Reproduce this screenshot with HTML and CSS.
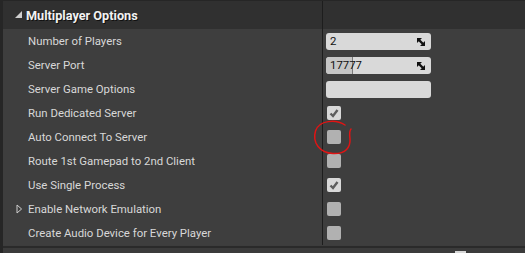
FILE: index.html
```html
<!DOCTYPE html>
<html lang="en">
<head>
  <meta charset="UTF-8" />
  <title>Multiplayer Options</title>
  <link rel="stylesheet" href="styles.css">
</head>
<body>
  <div class="panel">
    <div class="header">
      <div class="name">
        <svg class="caret" width="7" height="7" viewBox="0 0 7 7"><polygon points="0,7 7,7 7,0" fill="#cfcfcf"/></svg>
        Multiplayer Options
      </div>
      <div class="value"></div>
    </div>

    <div class="row">
      <div class="name">Number of Players</div>
      <div class="value">
        <div class="spin"><span>2</span>
          <svg class="arrows" width="8" height="8" viewBox="0 0 8 8"><polygon points="0,0 5,0 0,5" fill="#111"/><polygon points="8,8 8,3 3,8" fill="#111"/><line x1="1" y1="1" x2="7" y2="7" stroke="#111" stroke-width="2.4"/></svg>
        </div>
      </div>
    </div>
    <div class="row">
      <div class="name">Server Port</div>
      <div class="value">
        <div class="spin"><div class="fill"></div><span>17777</span>
          <svg class="arrows" width="8" height="8" viewBox="0 0 8 8"><polygon points="0,0 5,0 0,5" fill="#111"/><polygon points="8,8 8,3 3,8" fill="#111"/><line x1="1" y1="1" x2="7" y2="7" stroke="#111" stroke-width="2.4"/></svg>
        </div>
      </div>
    </div>
    <div class="row">
      <div class="name">Server Game Options</div>
      <div class="value"><div class="text-box"></div></div>
    </div>
    <div class="row">
      <div class="name">Run Dedicated Server</div>
      <div class="value"><div class="check on"><svg width="14" height="14" viewBox="0 0 14 14"><polyline points="3.5,7.5 6,10 10.5,4" fill="none" stroke="#5d5d5d" stroke-width="2.4"/></svg></div></div>
    </div>
    <div class="row">
      <div class="name">Auto Connect To Server</div>
      <div class="value"><div class="check"></div></div>
    </div>
    <div class="row">
      <div class="name">Route 1st Gamepad to 2nd Client</div>
      <div class="value"><div class="check"></div></div>
    </div>
    <div class="row">
      <div class="name">Use Single Process</div>
      <div class="value"><div class="check on"><svg width="14" height="14" viewBox="0 0 14 14"><polyline points="3.5,7.5 6,10 10.5,4" fill="none" stroke="#5d5d5d" stroke-width="2.4"/></svg></div></div>
    </div>
    <div class="row">
      <div class="name">
        <svg class="expand" width="7" height="10" viewBox="0 0 7 10"><polygon points="1,1 5.6,5 1,9" fill="none" stroke="#cfcfcf" stroke-width="1"/></svg>
        Enable Network Emulation
      </div>
      <div class="value"><div class="check"></div></div>
    </div>
    <div class="row">
      <div class="name">Create Audio Device for Every Player</div>
      <div class="value"><div class="check"></div></div>
    </div>

    <div class="footer"><span class="scroll"></span></div>

    <svg class="mark" width="525" height="253" viewBox="0 0 525 253">
      <path d="M345 125 C 336 119, 319 120, 315.5 131 C 312 143, 320 153, 333 153.5 C 346 154, 350.5 147, 350 139 C 349.5 134, 349 131, 351 129" fill="none" stroke="#e01414" stroke-width="1.5" stroke-linecap="round"/>
    </svg>
  </div>
</body>
</html>
```

FILE: styles.css
```css
body {
  margin: 0;
  background: #3d3d3d;
  font-family: Roboto, 'Liberation Sans', sans-serif;
  width: 525px;
  height: 253px;
  overflow: hidden;
}

.panel {
  position: relative;
  border-left: 3px solid #262626;
  height: 253px;
  box-sizing: border-box;
}

.header,
.row {
  display: grid;
  grid-template-columns: 319px 1fr;
}

.header {
  height: 28px;
  border-top: 1px solid #262626;
  background: #303030;
}

.header .name {
  display: flex;
  align-items: center;
  padding-left: 12px;
  gap: 4px;
  font-size: 12.7px;
  font-weight: bold;
  color: #f2f2f2;
  text-shadow: 1px 1px 0 #111;
}

.caret {
  margin-top: -1px;
}

.value {
  border-left: 1px solid #1d1d1d;
}

.row {
  height: 24px;
  background: #3e3e3e;
}

.row .name {
  display: flex;
  align-items: center;
  padding-left: 25px;
  font-size: 11.4px;
  color: #d8d8d8;
  position: relative;
}

.expand {
  position: absolute;
  left: 13px;
  top: 7px;
}

.row .value {
  display: flex;
  align-items: center;
}

.spin,
.text-box {
  position: relative;
  margin-left: 3px;
  width: 105px;
  height: 17px;
  border-radius: 3px;
  background: #d9d9d9;
  box-sizing: border-box;
  display: flex;
  align-items: center;
  overflow: hidden;
}

.spin span {
  position: relative;
  padding-left: 4px;
  font-size: 11.4px;
  color: #111;
}

.fill {
  position: absolute;
  left: 0;
  top: 0;
  bottom: 0;
  width: 26px;
  background: #c6c6c6;
  border-right: 1px solid #7a7a7a;
  border-radius: 3px 0 0 3px;
}

.arrows {
  position: absolute;
  right: 6px;
  top: 5px;
}

.check {
  margin-left: 4px;
  width: 14px;
  height: 14px;
  border-radius: 2px;
  background: #b1b1b1;
}

.check.on {
  background: #d8d8d8;
}

.check svg {
  display: block;
}

.footer {
  height: 8px;
  border-top: 2px solid #2a2a2a;
  margin-top: 1px;
  background: #3b3b3b;
  position: relative;
}

.scroll {
  position: absolute;
  left: 452px;
  top: 3px;
  width: 11px;
  height: 2px;
  background: #d6d6d6;
}

.mark {
  position: absolute;
  left: -3px;
  top: 0;
  pointer-events: none;
}
```
